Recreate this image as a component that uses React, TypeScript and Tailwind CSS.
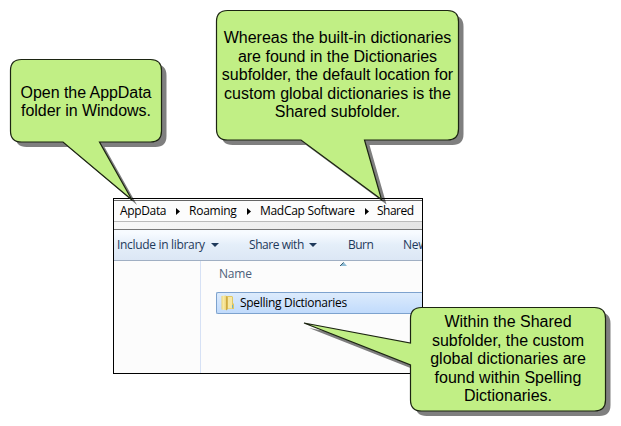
import type { ReactNode } from "react";

function Crumb({ children, className = "" }: { children: ReactNode; className?: string }) {
  return <span className={`shrink-0 whitespace-nowrap ${className}`}>{children}</span>;
}

function CrumbArrow({ className }: { className: string }) {
  return (
    <svg className={`h-[7px] w-[4px] shrink-0 ${className}`} viewBox="0 0 4 7">
      <path d="M0 0L4 3.5L0 7Z" fill="#000" />
    </svg>
  );
}

function DropArrow() {
  return (
    <svg className="ml-[6px] h-[4px] w-[8px] shrink-0" viewBox="0 0 8 4">
      <path d="M0 0H8L4 4Z" fill="#1e395b" />
    </svg>
  );
}

function FolderIcon() {
  return (
    <svg className="h-[16px] w-[13px] shrink-0" viewBox="0 0 13 16">
      <defs>
        <linearGradient id="flap" x1="0" x2="1">
          <stop offset="0" stopColor="#e9d06c" />
          <stop offset="0.35" stopColor="#f8eba9" />
          <stop offset="1" stopColor="#ecd273" />
        </linearGradient>
      </defs>
      <path d="M5 1H11L12 2V8L13 9V14H6Z" fill="#e0c764" />
      <path d="M7 2H11V13.5H7Z" fill="#f6e8a5" />
      <path d="M0.5 1L5 0.5L5.5 1.5V15L0.5 14.5Z" fill="url(#flap)" />
      <path d="M5 1L6.5 2V14.5L5 15.5Z" fill="#cdaa42" />
      <path d="M11 10H12V13H11Z" fill="#6fb4c4" />
    </svg>
  );
}

function Explorer() {
  return (
    <section className="flex h-[176px] w-[310px] flex-col overflow-hidden border border-black bg-[#fcfcfc] font-['Open_Sans','Noto_Sans',sans-serif] text-[12px] leading-[16px]">
      <nav className="mt-px flex h-[22px] shrink-0 items-center border-y border-t-[#666] border-b-[#bbb] bg-[#fcfcfc] pl-[6px] text-black">
        <Crumb className="w-[46px] tracking-[-0.35px]">AppData</Crumb>
        <CrumbArrow className="ml-[10px]" />
        <Crumb className="ml-[9px] w-[48px] tracking-[-0.25px]">Roaming</Crumb>
        <CrumbArrow className="ml-[10px]" />
        <Crumb className="ml-[9px] w-[95px] tracking-[-0.3px]">MadCap Software</Crumb>
        <CrumbArrow className="ml-[10px]" />
        <Crumb className="ml-[8px] tracking-[-0.5px]">Shared</Crumb>
      </nav>
      <div className="h-[7px] shrink-0 bg-linear-to-r from-[#f8f8f8] to-[#e5e5e5]" />
      <div className="flex h-[32px] shrink-0 items-center border-t border-b border-t-[#777] border-b-[#a0afc3] bg-linear-to-b from-[#f7fbff] from-10% via-[#e4eef9] via-50% to-[#dce7f5] pl-[3px] text-[#1e395b]">
        <span className="w-[88px] shrink-0 tracking-[-0.32px] whitespace-nowrap">Include in library</span>
        <DropArrow />
        <span className="ml-[30px] w-[54px] shrink-0 tracking-[-0.45px] whitespace-nowrap">Share with</span>
        <DropArrow />
        <span className="ml-[31px] w-[55px] shrink-0 tracking-[-0.5px] whitespace-nowrap">Burn</span>
        <span className="shrink-0 tracking-[-0.3px] whitespace-nowrap">New</span>
      </div>
      <div className="flex min-h-0 flex-1">
        <aside className="w-[87px] shrink-0 border-r border-[#d6e1f5]" />
        <main className="flex min-w-0 flex-1 flex-col pl-[15px]">
          <div className="flex h-[31px] shrink-0 pl-[3px] text-[#4c607a]">
            <span className="mt-[5px] w-[121px] tracking-[-0.2px]">Name</span>
            <svg className="mt-px h-[4px] w-[7px]" viewBox="0 0 7 4">
              <path d="M0 4L3.5 0L7 4Z" fill="#8fbcd5" />
              <path d="M0 4L3.5 0.5" stroke="#3c5e72" fill="none" />
            </svg>
          </div>
          <div className="flex h-[22px] shrink-0 items-center rounded-l-[2px] border border-r-0 border-[#7da2ce] bg-linear-to-b from-[#dcebfc] to-[#c1dbfc] pl-[4px] text-black">
            <FolderIcon />
            <span className="ml-[6px] tracking-[-0.3px] whitespace-nowrap">Spelling Dictionaries</span>
          </div>
        </main>
      </div>
    </section>
  );
}

type Line = { text: string; className: string };

function Callout({ className, shape, lines }: { className: string; shape: string; lines: Line[] }) {
  return (
    <div className={`absolute ${className}`}>
      <svg className="absolute inset-0 h-full w-full overflow-visible">
        <path d={shape} transform="translate(5 5)" fill="#000" fillOpacity="0.5" />
        <path d={shape} fill="#c1ef85" stroke="#1c2412" strokeWidth="1.2" />
      </svg>
      <div className="relative flex flex-col items-center font-['Liberation_Sans',Arial,sans-serif] text-[16px] leading-[18.6px] text-black">
        {lines.map((line) => (
          <span key={line.text} className={`whitespace-nowrap ${line.className}`}>{line.text}</span>
        ))}
      </div>
    </div>
  );
}

export default function App() {
  return (
    <div className="relative h-[426px] w-[621px] overflow-hidden bg-white pt-[198px] pl-[113px]">
      <Explorer />
      <Callout
        className="top-[59px] left-[10px] h-[83px] w-[152px] pt-[24.5px]"
        shape="M11.5 0.5H140.5Q151.5 0.5 151.5 11.5V72Q151.5 83 140.5 83H89.5L122 141L53 83H11.5Q0.5 83 0.5 72V11.5Q0.5 0.5 11.5 0.5Z"
        lines={[
          { text: "Open the AppData", className: "tracking-[-0.05px]" },
          { text: "folder in Windows.", className: "tracking-[-0.05px]" },
        ]}
      />
      <Callout
        className="top-[10px] left-[216px] h-[130px] w-[243px] pt-[19px]"
        shape="M11.5 0.5H231.5Q242.5 0.5 242.5 11.5V119Q242.5 130 231.5 130H148.5L165.5 189.5L85 130H11.5Q0.5 130 0.5 119V11.5Q0.5 0.5 11.5 0.5Z"
        lines={[
          { text: "Whereas the built-in dictionaries", className: "" },
          { text: "are found in the Dictionaries", className: "" },
          { text: "subfolder, the default location for", className: "" },
          { text: "custom global dictionaries is the", className: "" },
          { text: "Shared subfolder.", className: "" },
        ]}
      />
      <Callout
        className="top-[307px] left-[410px] h-[104px] w-[196px] pt-[6px]"
        shape="M11.5 0.5H184.5Q195.5 0.5 195.5 11.5V93Q195.5 104 184.5 104H11.5Q0.5 104 0.5 93V58L-106 16L0.5 36V11.5Q0.5 0.5 11.5 0.5Z"
        lines={[
          { text: "Within the Shared", className: "" },
          { text: "subfolder, the custom", className: "" },
          { text: "global dictionaries are", className: "" },
          { text: "found within Spelling", className: "" },
          { text: "Dictionaries.", className: "" },
        ]}
      />
    </div>
  );
}
